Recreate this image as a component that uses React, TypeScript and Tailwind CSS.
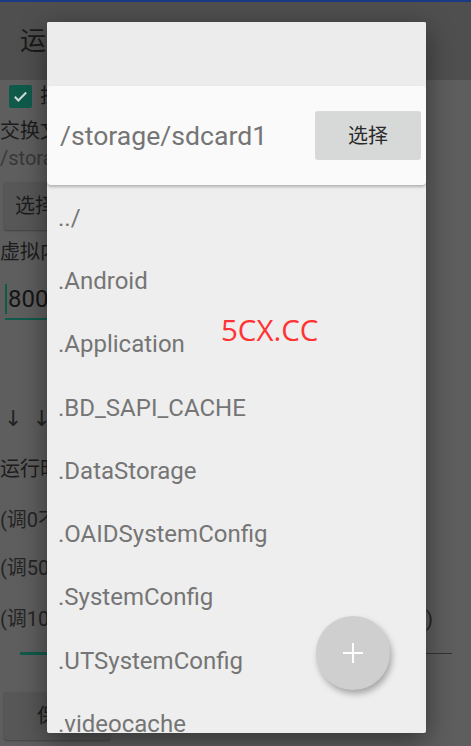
import React from "react";

const cjk = { fontFamily: "Roboto, 'Noto Sans CJK SC', sans-serif" };

const items = [
  "../",
  ".Android",
  ".Application",
  ".BD_SAPI_CACHE",
  ".DataStorage",
  ".OAIDSystemConfig",
  ".SystemConfig",
  ".UTSystemConfig",
  ".videocache",
];

export default function App() {
  return (
    <div className="relative w-[471px] h-[746px] overflow-hidden bg-[#5e5e5e]" style={cjk}>
      <div className="h-[2px] bg-[#1b3a86]" />
      <div className="h-[78px] bg-[#4f4f4f] flex items-center pl-[20px] text-[26px] text-[#1a1a1a]">
        运行设置
      </div>
      <div className="flex flex-col text-[20px] text-[#1c1c1c]">
        <div className="h-[32px] flex items-center pl-[9px] gap-[8px]">
          <div className="w-[23px] h-[23px] rounded-[2px] bg-[#0f5a4b] flex items-center justify-center">
            <svg width="17" height="17" viewBox="0 0 24 24">
              <path d="M4 12.5l5 5L20 6.5" fill="none" stroke="#d2d8d6" strokeWidth="3" />
            </svg>
          </div>
          <span>挂载交换文件</span>
        </div>
        <div className="h-[26px] mt-[6px] flex items-center leading-none">交换文件路径</div>
        <div className="h-[27px] flex items-center leading-none text-[#383838]">/storage/sdcard1/swap</div>
        <div className="mt-[11px] ml-[4px] w-[106px] h-[48px] rounded-[3px] bg-[#575757] shadow-[0_1px_2px_rgba(0,0,0,0.3)] flex items-center pl-[11px]">
          选择路径
        </div>
        <div className="h-[24px] mt-[10px] flex items-center leading-none">虚拟内存大小</div>
        <div className="mt-[16px] ml-[5px] w-[140px] h-[40px] flex items-center border-b-[2px] border-[#0f5a4b] text-[24px] text-[#151515]">
          <div className="w-[2px] h-[30px] bg-[#0f5a4b] mr-[1px]" />
          800
        </div>
        <div
          className="mt-[85px] h-[26px] flex items-center pl-[4px] text-[22px] gap-[10px] text-[#222]"
          style={{ fontFamily: "'DejaVu Sans', sans-serif" }}
        >
          <span>↓</span>
          <span>↓</span>
        </div>
        <div className="mt-[25px] h-[26px] flex items-center leading-none">运行时参数</div>
        <div className="mt-[25px] h-[26px] flex items-center leading-none text-[#252525]">(调0不使用交换)</div>
        <div className="mt-[22px] h-[26px] flex items-center leading-none text-[#252525]">(调50使用一半)</div>
        <div className="mt-[25px] h-[26px] flex items-center justify-between pr-[38px] leading-none text-[#252525]">
          <span>(调100优先使用交换</span>
          <span>)</span>
        </div>
        <div className="mt-[20px] ml-[20px] w-[432px] h-[3px] flex items-center">
          <div className="w-[120px] h-[3px] bg-[#0f5a4b]" />
          <div className="flex-1 h-[1px] bg-[#333]" />
        </div>
        <div className="mt-[37px] ml-[4px] w-[106px] h-[48px] rounded-[3px] bg-[#575757] shadow-[0_1px_2px_rgba(0,0,0,0.3)] flex items-center justify-center">
          保存
        </div>
      </div>

      <div className="absolute left-[47px] top-[22px] w-[379px] h-[711px] rounded-[2px] bg-[#eeeeee] overflow-hidden shadow-[0_8px_28px_rgba(0,0,0,0.45)]">
        <div className="h-[64px] bg-[#ececec]" />
        <div className="h-[99px] bg-[#fafafa] rounded-[4px] shadow-[0_2px_3px_rgba(0,0,0,0.25)] flex items-center justify-between pl-[13px] pr-[5px] relative z-10">
          <span className="text-[26.6px] text-[#757575]">/storage/sdcard1</span>
          <div className="w-[106px] h-[49px] rounded-[3px] bg-[#d7d8d8] flex items-center justify-center text-[20px] text-[#2a2a2a]">
            选择
          </div>
        </div>
        <div className="flex flex-col pt-[1px]">
          {items.map((it) => (
            <div key={it} className="h-[63.3px] flex items-center pl-[11px] text-[24px] text-[#757575] shrink-0">
              {it}
            </div>
          ))}
        </div>
        <div className="absolute left-[174px] top-[293px] text-[29.5px] leading-none text-[#ff3333]" style={{ fontFamily: "'Open Sans', Roboto, sans-serif" }}>
          5CX.CC
        </div>
        <div className="absolute left-[269px] top-[594px] w-[74px] h-[74px] rounded-full bg-[#cfcfcf] shadow-[2px_4px_6px_rgba(0,0,0,0.3)] flex items-center justify-center">
          <svg width="22" height="22" viewBox="0 0 22 22">
            <path d="M11 1v20M1 11h20" stroke="#ffffff" strokeWidth="2" />
          </svg>
        </div>
      </div>
    </div>
  );
}
